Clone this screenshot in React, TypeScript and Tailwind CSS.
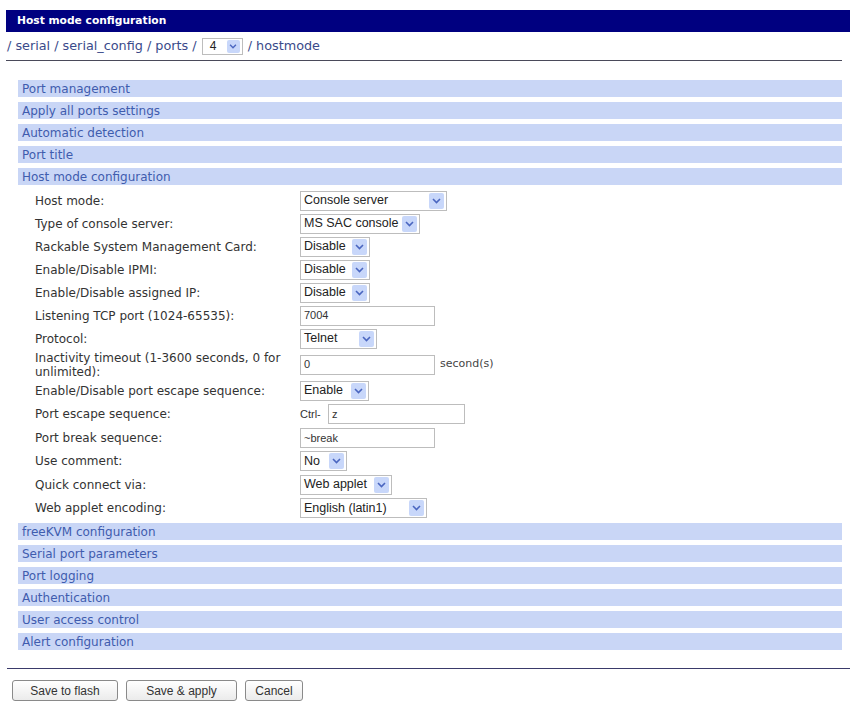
import type { ReactNode } from "react";

const topSections = [
  "Port management",
  "Apply all ports settings",
  "Automatic detection",
  "Port title",
  "Host mode configuration",
];

const bottomSections = [
  "freeKVM configuration",
  "Serial port parameters",
  "Port logging",
  "Authentication",
  "User access control",
  "Alert configuration",
];

function Arrow() {
  return (
    <span className="flex h-[16px] w-[15px] shrink-0 items-center justify-center rounded-[2px] bg-[#c8d7fa]">
      <svg width="9" height="6" viewBox="0 0 9 6">
        <path d="M1 1 L4.5 4.5 L8 1" stroke="#4a66c0" strokeWidth="1.6" fill="none" />
      </svg>
    </span>
  );
}

function Select({ text, w }: { text: string; w: string }) {
  return (
    <div
      className={`${w} flex h-[20px] items-center justify-between border border-[#bdbdbd] bg-white pl-[3px] pr-[2px] font-['Liberation_Sans',sans-serif] text-[12.5px] text-[#222]`}
    >
      <span className="whitespace-nowrap">{text}</span>
      <Arrow />
    </div>
  );
}

function Input({ value, w }: { value: string; w: string }) {
  return (
    <div
      className={`${w} flex h-[20px] items-center border border-[#bdbdbd] bg-white pl-[3px] font-['Liberation_Sans',sans-serif] text-[11px] text-[#333]`}
    >
      {value}
    </div>
  );
}

function Bar({ title }: { title: string }) {
  return (
    <div className="flex h-[17px] items-center bg-[#c9d6f6] pl-[4px] text-[12px] text-[#3f5cae]">
      {title}
    </div>
  );
}

type Row = { label: ReactNode; control: ReactNode; h: string };

const rows: Row[] = [
  { label: "Host mode:", control: <Select text="Console server" w="w-[147px]" />, h: "h-[23px]" },
  { label: "Type of console server:", control: <Select text="MS SAC console" w="w-[120px]" />, h: "h-[23px]" },
  { label: "Rackable System Management Card:", control: <Select text="Disable" w="w-[70px]" />, h: "h-[23px]" },
  { label: "Enable/Disable IPMI:", control: <Select text="Disable" w="w-[70px]" />, h: "h-[23px]" },
  { label: "Enable/Disable assigned IP:", control: <Select text="Disable" w="w-[70px]" />, h: "h-[23px]" },
  { label: "Listening TCP port (1024-65535):", control: <Input value="7004" w="w-[135px]" />, h: "h-[23px]" },
  { label: "Protocol:", control: <Select text="Telnet" w="w-[77px]" />, h: "h-[23px]" },
  {
    label: (
      <span className="block leading-[14px]">
        Inactivity timeout (1-3600 seconds, 0 for
        <br />
        unlimited):
      </span>
    ),
    control: (
      <div className="flex items-center gap-[5px]">
        <Input value="0" w="w-[135px]" />
        <span className="text-[11px] text-[#444]">second(s)</span>
      </div>
    ),
    h: "h-[29px]",
  },
  { label: "Enable/Disable port escape sequence:", control: <Select text="Enable" w="w-[69px]" />, h: "h-[23.5px]" },
  {
    label: "Port escape sequence:",
    control: (
      <div className="flex items-center">
        <span className="w-[28px] font-['Liberation_Sans',sans-serif] text-[11px] text-[#333]">Ctrl-</span>
        <Input value="z" w="w-[137px]" />
      </div>
    ),
    h: "h-[23.5px]",
  },
  { label: "Port break sequence:", control: <Input value="~break" w="w-[135px]" />, h: "h-[23.5px]" },
  { label: "Use comment:", control: <Select text="No" w="w-[47px]" />, h: "h-[23.5px]" },
  { label: "Quick connect via:", control: <Select text="Web applet" w="w-[92px]" />, h: "h-[23.5px]" },
  { label: "Web applet encoding:", control: <Select text="English (latin1)" w="w-[127px]" />, h: "h-[23.5px]" },
];

export default function App() {
  return (
    <div className="min-h-[701px] bg-white pt-[10px] font-['DejaVu_Sans',sans-serif] text-[11px]">
      {/* Title */}
      <div className="ml-[6px] mr-[1px] flex h-[22px] items-center bg-[#000080] pl-[11px] text-[10.7px] font-bold text-white">
        Host mode configuration
      </div>

      {/* Breadcrumb */}
      <div className="ml-[6px] mr-[9px] flex h-[29px] items-center border-b border-[#4a4a5a] pl-[1px] text-[12.8px] text-[#3a4a8a]">
        <span className="whitespace-pre">/ serial / serial_config / ports / </span>
        <div className="ml-[1px] mr-[5px] flex h-[17px] w-[41px] items-center justify-between border border-[#bdbdbd] bg-white pl-[7px] pr-[2px] font-['Liberation_Sans',sans-serif] text-[12px] text-[#222]">
          <span>4</span>
          <span className="flex h-[13px] w-[13px] items-center justify-center rounded-[2px] bg-[#c8d7fa]">
            <svg width="8" height="5" viewBox="0 0 9 6">
              <path d="M1 1 L4.5 4.5 L8 1" stroke="#4a66c0" strokeWidth="1.6" fill="none" />
            </svg>
          </span>
        </div>
        <span className="whitespace-pre">/ hostmode</span>
      </div>

      <div className="ml-[18px] mr-[9px] mt-[19px] flex flex-col">
        <div className="flex flex-col gap-[5px]">
          {topSections.map((s) => (
            <Bar key={s} title={s} />
          ))}
        </div>

        {/* Host mode form */}
        <div className="mt-[4px] flex flex-col">
          {rows.map((r, i) => (
            <div key={i} className={`${r.h} flex items-center`}>
              <div className="w-[282px] pl-[17px] text-[12px] text-[#333]">{r.label}</div>
              <div>{r.control}</div>
            </div>
          ))}
        </div>

        <div className="mt-[3px] flex flex-col gap-[5px]">
          {bottomSections.map((s) => (
            <Bar key={s} title={s} />
          ))}
        </div>
      </div>

      {/* Footer */}
      <div className="ml-[7px] mr-[1px] mt-[18px] border-t border-[#3a3a6a]" />
      <div className="ml-[12px] mt-[11px] flex gap-[8px] font-['Liberation_Sans',sans-serif] text-[12px] text-[#333]">
        <button className="h-[21px] w-[106px] rounded-[3px] border border-[#8a8a8a] bg-gradient-to-b from-white to-[#ebebeb]">
          Save to flash
        </button>
        <button className="h-[21px] w-[111px] rounded-[3px] border border-[#8a8a8a] bg-gradient-to-b from-white to-[#ebebeb]">
          Save &amp; apply
        </button>
        <button className="h-[21px] w-[58px] rounded-[3px] border border-[#8a8a8a] bg-gradient-to-b from-white to-[#ebebeb]">
          Cancel
        </button>
      </div>
    </div>
  );
}
